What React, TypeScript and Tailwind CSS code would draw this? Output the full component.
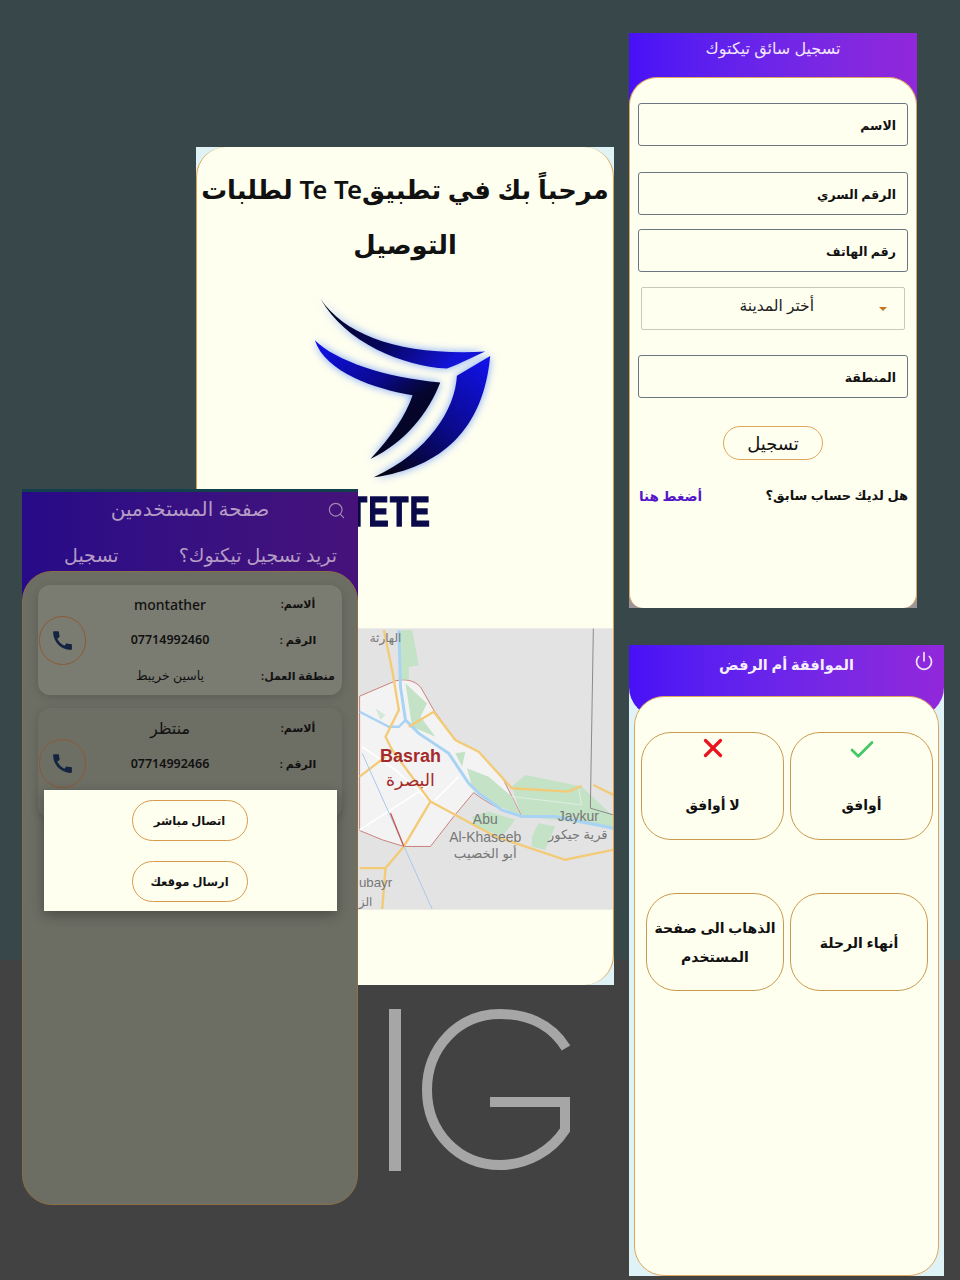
import React from 'react';
import { Check, Power, Search, X } from 'lucide-react';
import { MdCall } from 'react-icons/md';

const FONT = "font-['Noto_Sans','DejaVu_Sans',sans-serif]";

const Field: React.FC<{ label: string; className?: string }> = ({ label, className }) => (
  <div className={`flex h-[43px] items-center rounded-[3px] border border-[#6b7780] px-[11px] pt-[3px] text-[12.5px] font-semibold text-[#111] ${className ?? ''}`}>
    {label}
  </div>
);

const PillButton: React.FC<{ label: string }> = ({ label }) => (
  <div className="flex h-[41px] w-[116px] items-center justify-center rounded-full border-[1.5px] border-[#d89a4e] text-[11.5px] font-semibold text-[#111]">
    {label}
  </div>
);

const CallCircle = () => (
  <div className="flex h-[49px] w-[47px] shrink-0 items-center justify-center rounded-full border border-[#8b5a35]">
    <MdCall className="h-[25px] w-[25px] text-[#14233f]" />
  </div>
);

const UserRow: React.FC<{ label: string; children: React.ReactNode }> = ({ label, children }) => (
  <div className="grid h-[36px] grid-cols-[88px_168px] items-center text-center text-[#111]">
    <span className="text-[11px] font-semibold whitespace-nowrap">{label}</span>
    {children}
  </div>
);

const Choice: React.FC<{ className: string; children: React.ReactNode }> = ({ className, children }) => (
  <div className={`relative flex items-center justify-center rounded-[30px] border border-[#c99a4e] text-center text-[14px] leading-[29px] font-semibold text-[#111] ${className}`}>
    {children}
  </div>
);

const BasrahMap = () => (
  <svg viewBox="196 628 417 282" className="block h-[282px] w-full">
    <rect x="196" y="628" width="417" height="282" fill="#e3e3e3" />
    <g transform="translate(355 620) scale(0.3333)">
      <path d="M12 228 L120 182 C150 175 175 180 195 200 L235 270 L300 360 L365 392 L440 470 L500 590 C440 575 390 545 355 518 L295 590 L225 680 L145 680 L80 660 L12 632 Z" fill="#f3f3f3" stroke="#c9837c" strokeWidth="3" />
      <path d="M130 30 L170 30 L190 135 L160 140 L160 178 L135 178 Z" fill="#c3e2c6" />
      <path d="M150 190 L215 250 L195 290 L240 350 L170 320 Z M300 400 L330 395 L320 440 Z" fill="#c3e2c6" />
      <path d="M335 445 L400 470 L470 530 L495 585 L430 560 L350 500 Z" fill="#c3e2c6" />
      <path d="M470 500 L510 465 L680 500 L775 590 L775 625 L600 600 L500 590 Z" fill="#c3e2c6" />
      <path d="M530 650 L550 610 L600 620 L570 690 L530 680 Z M350 590 L400 575 L480 600 L440 650 L360 620 Z" fill="#c3e2c6" />
      <path d="M60 265 L90 285 L75 300 Z" fill="#d5e8d6" />
      <path d="M130 30 L135 200 L150 300 L190 340 L280 400 L340 490 L370 520 L440 570 L500 590 L600 590 L775 625" fill="none" stroke="#a9d3f5" strokeWidth="9" />
      <path d="M12 275 L100 320 L130 320 L150 300" fill="none" stroke="#a9d3f5" strokeWidth="7" />
      <path d="M12 630 L230 490 M240 540 L310 470 M20 380 L120 450 L225 545" fill="none" stroke="#ffffff" strokeWidth="5" />
      <path d="M470 530 L680 555 L670 500" fill="none" stroke="#dfeee0" strokeWidth="3" />
      <path d="M85 30 L110 150 L130 270 L90 350 L110 390 L225 545 L145 680 L90 745 L12 745 M90 745 L80 868 M160 320 L235 275 L300 360 L370 395 L470 505 L640 515 L680 498 M715 495 L775 525 M12 470 L90 410 M225 545 L420 650 L630 720 L775 690" fill="none" stroke="#f3cb76" strokeWidth="7" />
      <path d="M20 400 L230 868" fill="none" stroke="#a9c9ea" strokeWidth="3" />
      <path d="M105 580 L145 680" fill="none" stroke="#c9564f" strokeWidth="4" />
      <path d="M715 25 L706 565 L775 585" fill="none" stroke="#8a8a8a" strokeWidth="3" />
      <g fontFamily="'Liberation Sans', 'DejaVu Sans', sans-serif" textAnchor="middle">
        <text x="165" y="426" fontSize="54" fontWeight="bold" fill="#a52a2a">Basrah</text>
        <text x="165" y="499" fontSize="52" fill="#a52a2a">البصرة</text>
        <text x="390" y="612" fontSize="42" fill="#777777">Abu</text>
        <text x="390" y="668" fontSize="42" fill="#777777">Al-Khaseeb</text>
        <text x="390" y="716" fontSize="40" fill="#777777">أبو الخصيب</text>
        <text x="670" y="602" fontSize="42" fill="#777777">Jaykur</text>
        <text x="668" y="658" fontSize="39" fill="#777777">قرية جيكور</text>
        <text x="90" y="64" fontSize="36" fill="#777777">الهارثة</text>
        <text x="60" y="802" fontSize="40" fill="#777777">ubayr</text>
        <text x="30" y="858" fontSize="36" fill="#777777">الز</text>
      </g>
    </g>
  </svg>
);

const TeTeLogo = () => (
  <svg viewBox="370 470 540 550" className="h-[183px] w-[180px] drop-shadow-[0_0_4px_rgba(60,120,255,0.7)]">
    <defs>
      <linearGradient id="wingTop" x1="0" y1="0" x2="1" y2="0.4">
        <stop offset="0" stopColor="#04041c" />
        <stop offset="0.55" stopColor="#05055a" />
        <stop offset="1" stopColor="#1414d8" />
      </linearGradient>
      <linearGradient id="wingMid" x1="0" y1="0" x2="0.75" y2="1">
        <stop offset="0" stopColor="#1010ee" />
        <stop offset="0.45" stopColor="#0a0a90" />
        <stop offset="0.7" stopColor="#05052e" />
        <stop offset="1" stopColor="#05051e" />
      </linearGradient>
      <linearGradient id="wingRight" x1="1" y1="0" x2="0.2" y2="1">
        <stop offset="0" stopColor="#1212ee" />
        <stop offset="0.55" stopColor="#0a0a88" />
        <stop offset="1" stopColor="#04041a" />
      </linearGradient>
    </defs>
    <path d="M395 478 C470 590 640 650 890 637 C840 660 800 680 775 688 C640 680 470 610 395 478 Z" fill="url(#wingTop)" />
    <path d="M378 603 C440 665 590 715 755 730 C720 820 650 910 545 960 C610 890 650 830 672 768 C560 750 410 700 378 603 Z" fill="url(#wingMid)" />
    <path d="M905 650 L805 710 C800 810 720 940 555 1015 C760 985 885 870 905 650 Z" fill="url(#wingRight)" />
  </svg>
);

export default function App() {
  return (
    <div className={`relative h-[1280px] w-[960px] overflow-hidden ${FONT}`} dir="ltr">
      <div className="h-[960px] bg-[#37474a]" />
      <div className="h-[320px] bg-[#424242]" />

      {/* IG watermark */}
      <svg viewBox="0 0 220 200" className="absolute top-[990px] left-[370px] h-[200px] w-[220px]">
        <rect x="19" y="19" width="12" height="162" fill="#a6a6a6" />
        <path d="M196 58 C180 32 154 24 130 24 C88 24 57 58 57 100 C57 142 88 175 130 175 C158 175 182 160 195 140 L195 112 L120 112" fill="none" stroke="#a6a6a6" strokeWidth="10" />
      </svg>

      {/* welcome screen */}
      <div className="absolute top-[147px] left-[196px] h-[838px] w-[418px] bg-[#dff3f6]">
        <div className="flex h-full flex-col items-center rounded-[30px] border-x border-[#dd9f4e] bg-[#fffff0]" dir="rtl">
          <h1 className="mt-[15px] text-center text-[25.8px] leading-[55px] font-semibold whitespace-nowrap text-[#111]">
            مرحباً بك في تطبيقTe Te لطلبات
            <br />
            التوصيل
          </h1>
          <div className="mt-[24px] mr-[6px]">
            <TeTeLogo />
          </div>
          <div className="mt-[14px] mr-[31px] scale-x-[0.7] font-['Liberation_Sans',sans-serif] text-[43px] leading-[37px] font-bold tracking-[2px] text-[#0a0a4a] [-webkit-text-stroke:1.5px_#0a0a4a]" dir="ltr">
            TETE
          </div>
          <div className="mt-[98px] w-full">
            <BasrahMap />
          </div>
        </div>
      </div>

      {/* driver registration */}
      <div className="absolute top-[33px] left-[629px] flex h-[575px] w-[288px] flex-col bg-[#9c9496]" dir="rtl">
        <div className="h-[100px] bg-gradient-to-r from-[#4810f6] to-[#9227da] pt-[5px] text-center text-[16px] leading-[20px] font-medium text-[#f1e6fb]">
          تسجيل سائق تيكتوك
        </div>
        <div className="relative -mt-[56px] flex flex-1 flex-col rounded-t-[28px] rounded-b-[14px] border-x border-t border-[#dfa55c] bg-[#fffff0] px-[8px] pt-[25px]">
          <Field label="الاسم" />
          <Field label="الرقم السري" className="mt-[26px]" />
          <Field label="رقم الهاتف" className="mt-[14px]" />
          <div className="mx-[3px] mt-[15px] flex h-[43px] items-center rounded-[2px] border border-[#c9c9b8] pr-[17px] pb-[5px] text-[15.5px] text-[#222]">
            <span className="mt-[5px] h-0 w-0 border-x-[4px] border-t-[4px] border-x-transparent border-t-[#c8741f]" />
            <span className="mr-[65px]">أختر المدينة</span>
          </div>
          <Field label="المنطقة" className="mt-[25px]" />
          <div className="mt-[28px] flex h-[34px] w-[100px] items-center justify-center self-center rounded-full border border-[#dfa55c] text-[18px] font-medium text-[#111]">
            تسجيل
          </div>
          <div className="mt-[26px] flex items-center justify-between text-[13px] font-semibold">
            <span className="text-[#111]">هل لديك حساب سابق؟</span>
            <span className="ml-[1px] text-[13.5px] text-[#5518c8]">أضغط هنا</span>
          </div>
        </div>
      </div>

      {/* accept / reject */}
      <div className="absolute top-[645px] left-[629px] flex h-[631px] w-[315px] flex-col bg-[#dff3f6]" dir="rtl">
        <div className="relative flex h-[72px] justify-center rounded-b-[30px] bg-gradient-to-r from-[#4810f6] to-[#9227da] pt-[8px] text-[14.5px] leading-[22px] font-semibold text-[#f5eefc]">
          الموافقة أم الرفض
          <Power className="absolute top-[6px] left-[285px] h-[20px] w-[20px] text-[#f1e6fb]" strokeWidth={2} />
        </div>
        <div className="relative -mt-[21px] mx-[5px] flex flex-1 flex-col rounded-[30px] border border-[#dfa55c] bg-[#fffff0] px-[5px] pt-[35px]">
          <div className="flex gap-[6px]">
            <Choice className="h-[108px] w-[143px]">
              <Check className="absolute top-[2px] h-[30px] w-[30px] text-[#44c767]" strokeWidth={2.2} />
              <span className="mt-[36px]">أوافق</span>
            </Choice>
            <Choice className="h-[108px] w-[143px]">
              <X className="absolute top-[0px] h-[30px] w-[30px] text-[#e8141e]" strokeWidth={2.6} />
              <span className="mt-[36px]">لا أوافق</span>
            </Choice>
          </div>
          <div className="mt-[53px] flex gap-[6px] pr-[5px]">
            <Choice className="h-[98px] w-[138px]">أنهاء الرحلة</Choice>
            <Choice className="h-[98px] w-[138px]">
              الذهاب الى صفحة
              <br />
              المستخدم
            </Choice>
          </div>
        </div>
      </div>

      {/* users page, dimmed behind its dialog */}
      <div className="absolute top-[489px] left-[22px] flex h-[716px] w-[336px] flex-col border-t-[3px] border-[#123f4c]" dir="rtl">
        <div className="h-[113px] bg-gradient-to-r from-[#280a88] to-[#46127a] text-[#b59cc4]">
          <div className="relative pt-[5px] text-center text-[20px] leading-[24px] font-medium">
            صفحة المستخدمين
            <Search className="absolute top-[9px] right-[12px] h-[19px] w-[19px] text-[#9d8cb0]" strokeWidth={1.5} />
          </div>
          <div className="mt-[22px] flex justify-between pr-[21px] pl-[42px] text-[19px] leading-[24px]">
            <span>تريد تسجيل تيكتوك؟</span>
            <span>تسجيل</span>
          </div>
        </div>
        <div className="relative -mt-[34px] flex flex-1 flex-col gap-[13px] rounded-[30px] border border-[#8d6f47] bg-[#6c6d63] px-[15px] pt-[13px]">
          <div className="flex h-[110px] items-center justify-end rounded-[12px] bg-[#7b7c71] pl-[2px] shadow-[0_2px_8px_rgba(0,0,0,0.15)]" dir="ltr">
            <CallCircle />
            <div className="flex flex-col" dir="rtl">
              <UserRow label="ألاسم:"><span className="text-[14px] font-medium">montather</span></UserRow>
              <UserRow label="الرقم :"><span className="text-[12.5px] font-semibold">07714992460</span></UserRow>
              <UserRow label="منطقة العمل:"><span className="text-[12.5px]">ياسين خريبط</span></UserRow>
            </div>
          </div>
          <div className="flex h-[110px] items-start justify-end rounded-[12px] bg-[#6d6e64] pl-[2px] shadow-[0_2px_8px_rgba(0,0,0,0.15)]" dir="ltr">
            <div className="mt-[31px]">
              <CallCircle />
            </div>
            <div className="flex flex-col pt-[2px]" dir="rtl">
              <UserRow label="ألاسم:"><span className="text-[16px] font-medium">منتظر</span></UserRow>
              <UserRow label="الرقم :"><span className="text-[12.5px] font-semibold">07714992466</span></UserRow>
            </div>
          </div>
        </div>
        <div className="absolute top-[298px] left-[22px] flex h-[121px] w-[293px] flex-col items-center gap-[20px] bg-[#fffff0] pt-[10px] pr-[2px] shadow-[0_4px_12px_rgba(0,0,0,0.3)]">
          <PillButton label="اتصال مباشر" />
          <PillButton label="ارسال موقعك" />
        </div>
      </div>
    </div>
  );
}
